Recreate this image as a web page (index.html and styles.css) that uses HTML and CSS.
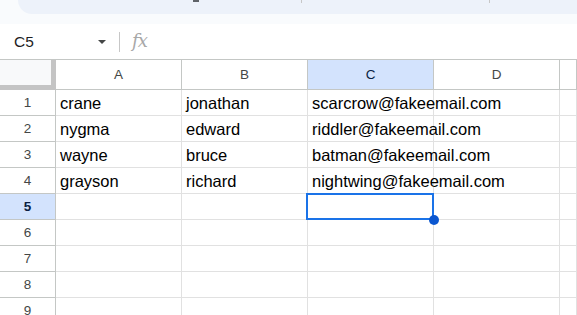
FILE: index.html
```html
<!DOCTYPE html>
<html lang="en">
<head>
    <meta charset="UTF-8">
    <meta name="viewport" content="width=device-width, initial-scale=1.0">
    <title>Sheet</title>
    <link rel="stylesheet" href="styles.css">
</head>
<body>
    <div class="top-area">
        <div class="toolbar">
            <span class="tool-mark"></span>
            <span class="tool-sep sep-one"></span>
            <span class="tool-sep sep-two"></span>
        </div>
    </div>

    <div class="formula-bar">
        <div class="name-box">C5</div>
        <span class="caret"></span>
        <span class="divider"></span>
        <span class="fx">fx</span>
    </div>

    <div class="sheet">
        <div class="row head-row">
            <div class="corner"></div>
            <div class="cell col-head">A</div>
            <div class="cell col-head">B</div>
            <div class="cell col-head active">C</div>
            <div class="cell col-head">D</div>
            <div class="cell col-head last"></div>
        </div>
        <div class="row">
            <div class="row-head">1</div>
            <div class="cell">crane</div>
            <div class="cell">jonathan</div>
            <div class="cell">scarcrow@fakeemail.com</div>
            <div class="cell"></div>
            <div class="cell last"></div>
        </div>
        <div class="row">
            <div class="row-head">2</div>
            <div class="cell">nygma</div>
            <div class="cell">edward</div>
            <div class="cell">riddler@fakeemail.com</div>
            <div class="cell"></div>
            <div class="cell last"></div>
        </div>
        <div class="row">
            <div class="row-head">3</div>
            <div class="cell">wayne</div>
            <div class="cell">bruce</div>
            <div class="cell">batman@fakeemail.com</div>
            <div class="cell"></div>
            <div class="cell last"></div>
        </div>
        <div class="row">
            <div class="row-head">4</div>
            <div class="cell">grayson</div>
            <div class="cell">richard</div>
            <div class="cell">nightwing@fakeemail.com</div>
            <div class="cell"></div>
            <div class="cell last"></div>
        </div>
        <div class="row">
            <div class="row-head active">5</div>
            <div class="cell"></div>
            <div class="cell"></div>
            <div class="cell"></div>
            <div class="cell"></div>
            <div class="cell last"></div>
        </div>
        <div class="row">
            <div class="row-head">6</div>
            <div class="cell"></div>
            <div class="cell"></div>
            <div class="cell"></div>
            <div class="cell"></div>
            <div class="cell last"></div>
        </div>
        <div class="row">
            <div class="row-head">7</div>
            <div class="cell"></div>
            <div class="cell"></div>
            <div class="cell"></div>
            <div class="cell"></div>
            <div class="cell last"></div>
        </div>
        <div class="row">
            <div class="row-head">8</div>
            <div class="cell"></div>
            <div class="cell"></div>
            <div class="cell"></div>
            <div class="cell"></div>
            <div class="cell last"></div>
        </div>
        <div class="row">
            <div class="row-head">9</div>
            <div class="cell"></div>
            <div class="cell"></div>
            <div class="cell"></div>
            <div class="cell"></div>
            <div class="cell last"></div>
        </div>

        <div class="selection"><span class="handle"></span></div>
    </div>
</body>
</html>
```

FILE: styles.css
```css
body {
    margin: 0;
    font-family: "Liberation Sans", Arial, sans-serif;
    background: #fff;
    overflow: hidden;
}
.top-area {
    height: 24px;
    background: #f9fbfd;
}
.toolbar {
    position: relative;
    margin-left: 18px;
    height: 14px;
    background: #edf2fa;
    border-bottom-left-radius: 14px;
}
.tool-mark {
    position: absolute;
    left: 175px;
    top: 0;
    width: 6px;
    height: 2px;
    background: #5f6368;
}
.tool-sep {
    position: absolute;
    top: 0;
    width: 1px;
    height: 3px;
    background: #c7c7c7;
}
.sep-one {
    left: 283px;
}
.sep-two {
    left: 471px;
}
.formula-bar {
    display: flex;
    align-items: center;
    height: 35px;
    border-bottom: 1px solid #c4c7c5;
}
.name-box {
    width: 84px;
    padding-left: 14px;
    font-size: 15.5px;
    color: #1f1f1f;
}
.caret {
    width: 0;
    height: 0;
    border-left: 4px solid transparent;
    border-right: 4px solid transparent;
    border-top: 4px solid #444746;
    margin-top: 1px;
}
.divider {
    width: 1px;
    height: 20px;
    background: #c7c7c7;
    margin-left: 13px;
}
.fx {
    margin-left: 12px;
    font-family: "DejaVu Serif", serif;
    font-style: italic;
    font-size: 18px;
    color: #a8a8a8;
    letter-spacing: -1px;
    margin-top: -2px;
}
.sheet {
    position: relative;
}
.row {
    display: flex;
    height: 26px;
}
.head-row {
    height: 30px;
}
.corner {
    box-sizing: border-box;
    width: 56px;
    flex: none;
    background: #f8f9fa;
    border-right: 5px solid #c4c4c4;
    border-bottom: 5px solid #c4c4c4;
}
.row-head {
    box-sizing: border-box;
    width: 56px;
    flex: none;
    border-right: 1px solid #c4c7c5;
    border-bottom: 1px solid #c4c7c5;
    font-size: 13.5px;
    color: #444746;
    text-align: center;
    line-height: 25px;
}
.row-head.active {
    background: #d3e3fd;
    color: #0b1f43;
    font-weight: bold;
}
.cell {
    box-sizing: border-box;
    width: 126px;
    flex: none;
    border-right: 1px solid #e1e1e1;
    border-bottom: 1px solid #e1e1e1;
    padding: 0 4px;
    font-size: 16.5px;
    color: #000;
    line-height: 26px;
    white-space: nowrap;
}
.cell.last {
    flex: 1;
}
.col-head {
    border-right-color: #c4c7c5;
    border-bottom-color: #c4c7c5;
    font-size: 13.5px;
    color: #444746;
    text-align: center;
    line-height: 29px;
}
.col-head.active {
    background: #d3e3fd;
    color: #0b1f43;
}
.selection {
    position: absolute;
    left: 306px;
    top: 133px;
    width: 124px;
    height: 23px;
    border: 2px solid #1a73e8;
}
.handle {
    position: absolute;
    right: -7px;
    bottom: -7px;
    width: 10px;
    height: 10px;
    border-radius: 50%;
    background: #0b57d0;
}
```
